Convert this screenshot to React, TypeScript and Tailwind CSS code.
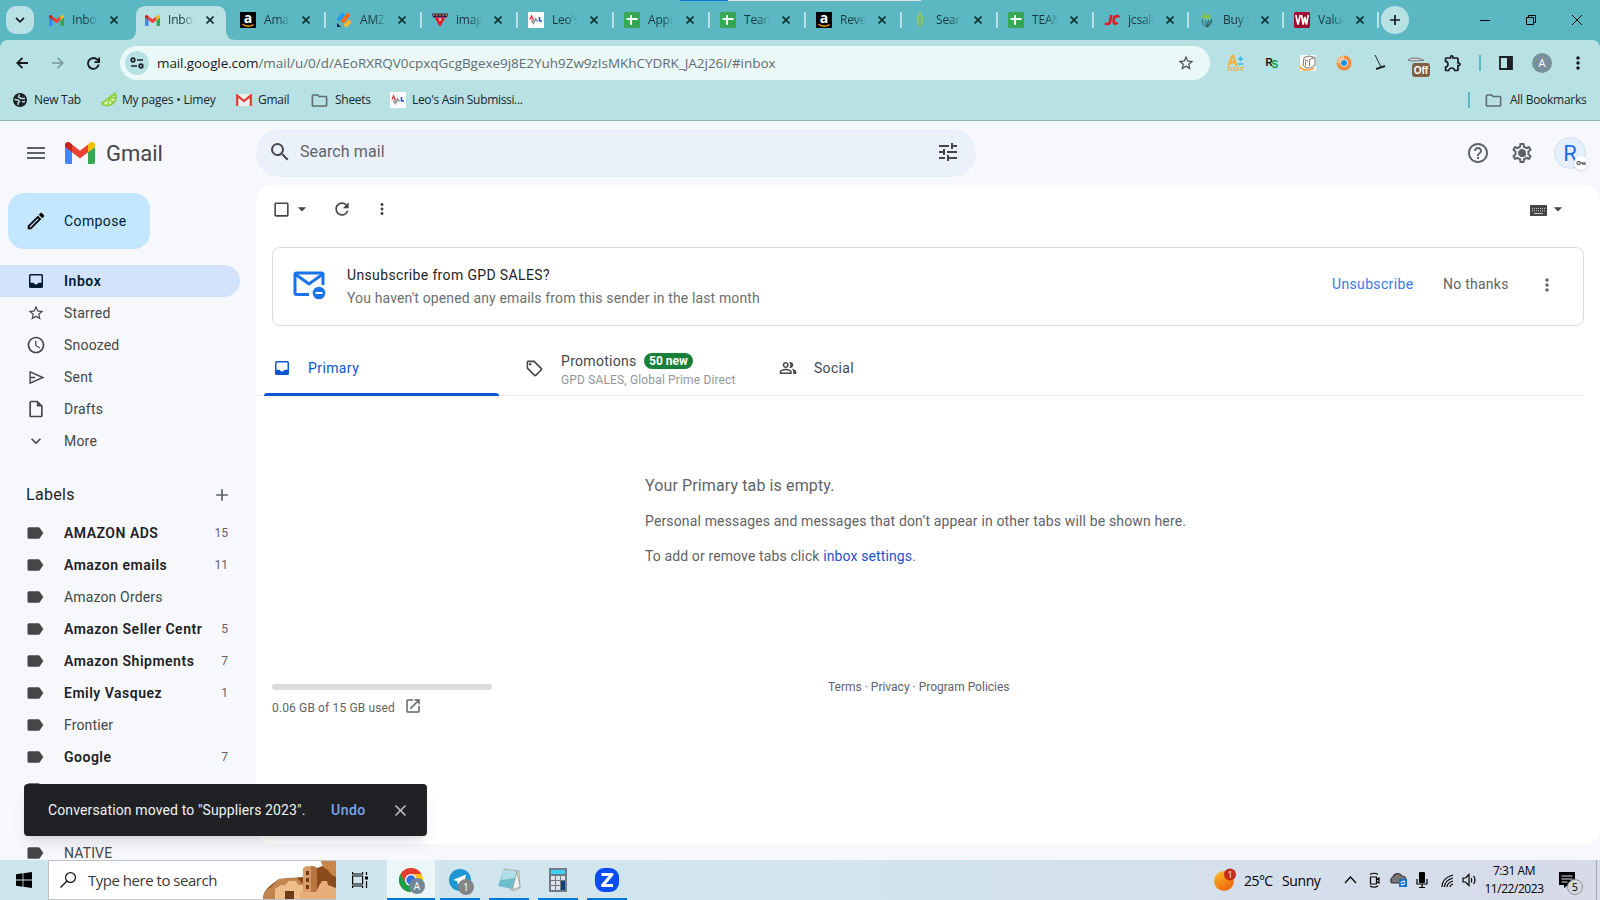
import type { ReactNode } from "react";
import {
  MdAccessTime,
  MdAdd,
  MdArrowDropDown,
  MdCheckBoxOutlineBlank,
  MdClose,
  MdHelpOutline,
  MdKeyboardArrowDown,
  MdLabel,
  MdMenu,
  MdMoreVert,
  MdOpenInNew,
  MdOutlineEdit,
  MdOutlineExtension,
  MdOutlineFolder,
  MdOutlineInsertDriveFile,
  MdOutlinePeopleAlt,
  MdOutlineSell,
  MdOutlineSettings,
  MdRefresh,
  MdSearch,
  MdStarBorder,
  MdTune,
} from "react-icons/md";

/* ---------- favicons ---------- */

const GmailIcon = ({ className = "" }: { className?: string }) => (
  <svg viewBox="0 0 30 22" className={className}>
    <path d="M0 5v15a2 2 0 0 0 2 2h5V10z" fill="#4285f4" />
    <path d="M30 5v15a2 2 0 0 1-2 2h-5V10z" fill="#34a853" />
    <path d="M7 2.600 15 8.700l8-6.100V10.300l-8 6.100-8-6.100z" fill="#ea4335" />
    <path d="M0 5V3C0 .2 3.300-1 5.400.9L7 2.300v8L0 5z" fill="#c5221f" />
    <path d="M30 5V3c0-2.800-3.300-4-5.400-2.100L23 2.300v8L30 5z" fill="#fbbc04" />
  </svg>
);

const GmailOldIcon = () => (
  <svg viewBox="0 0 16 12" className="h-3 w-4">
    <rect width="16" height="12" rx="1" fill="#eceff1" />
    <path d="M1.200 12V1.500L8 7l6.800-5.500V12" fill="none" stroke="#e0392c" strokeWidth="2.200" />
  </svg>
);

const AmazonIcon = () => (
  <svg viewBox="0 0 16 16" className="size-4">
    <rect width="16" height="16" fill="#000" />
    <text x="8" y="11" textAnchor="middle" fontSize="14" fontWeight="700" fontFamily="Open Sans, sans-serif" fill="#fff">a</text>
    <path d="M2.500 12.300c3 2.200 7.500 2.300 11 .3" fill="none" stroke="#f90" strokeWidth="1.300" />
  </svg>
);

const AmzIcon = () => (
  <svg viewBox="0 0 16 16" className="size-4" strokeLinecap="round" strokeWidth="4">
    <path d="M3 7 7 3" stroke="#1e9bff" />
    <path d="m7 9 5-6" stroke="#ff6a13" />
    <path d="m10 13 3-3" stroke="#ffb52e" />
    <path d="M1 11v4h4z" fill="#0b1f4d" strokeWidth="0" />
  </svg>
);

const FunnelIcon = () => (
  <svg viewBox="0 0 16 16" className="size-4">
    <path d="M0 1.500h16l-1 4H1z" fill="#3b1d4d" />
    <path d="M1 3h14" stroke="#e8a13c" strokeWidth="1" strokeDasharray="2 1" />
    <path d="M2.500 5.500h11L8 15z" fill="#e51c2b" />
    <path d="M6.500 6.500h3l-1.500 3z" fill="#fff" />
  </svg>
);

const LeoIcon = () => (
  <svg viewBox="0 0 16 16" className="size-4">
    <rect width="16" height="16" fill="#fff" />
    <path d="m2 7.500 1.500-3.500 2 4.500" fill="none" stroke="#e23b3b" strokeWidth="1.400" />
    <path d="m3.500 8.500 2 3L7.500 7l2 2.500" fill="none" stroke="#8d8f93" strokeWidth="1.500" />
    <path d="M11.500 5v4H14" fill="none" stroke="#1f5bc4" strokeWidth="1.600" />
  </svg>
);

const SheetIcon = () => (
  <svg viewBox="0 0 16 16" className="size-4">
    <rect width="16" height="16" rx="1.500" fill="#34a853" />
    <path d="M7 3v10M2.500 7h11" stroke="#fff" strokeWidth="1.800" />
  </svg>
);

const WheatIcon = () => (
  <svg viewBox="0 0 16 16" className="size-4" fill="#a4cf3e">
    <path d="M7.700 2h.7v14h-.7z" fill="#7fb52e" />
    <ellipse cx="8" cy="2" rx="1" ry="1.700" />
    <ellipse cx="6" cy="5" rx="1" ry="1.400" />
    <ellipse cx="10" cy="5" rx="1" ry="1.400" />
    <ellipse cx="6" cy="8.500" rx="1" ry="1.400" />
    <ellipse cx="10" cy="8.500" rx="1" ry="1.400" />
    <ellipse cx="6.400" cy="12" rx=".9" ry="1.200" />
    <ellipse cx="9.600" cy="12" rx=".9" ry="1.200" />
  </svg>
);

const JcIcon = () => (
  <svg viewBox="0 0 16 16" className="size-4">
    <path d="M7.500 3 5.800 10.500Q5.300 12 3.500 12H.8" fill="none" stroke="#e11b22" strokeWidth="2.700" />
    <path d="M15 5.200Q14.500 3.800 12.500 4.100 10.300 4.500 9.700 8q-.5 3.500 1.300 3.700 1.500.1 2.500-1.200" fill="none" stroke="#e11b22" strokeWidth="2.600" />
  </svg>
);

const PlantIcon = () => (
  <svg viewBox="0 0 16 16" className="size-4" fill="none">
    <path d="m8 6-6-2M8 6 5 1M8 6l3-4M8 6l4-.5" stroke="#8cc63f" strokeWidth="1.600" />
    <path d="M3.500 7.500q-.5 5.500 4.500 7.500 5-2 4.500-7.500L8 15M6.500 8.500 8 15l1.500-6.500" stroke="#2b5d5e" strokeWidth="1" />
  </svg>
);

const VwIcon = () => (
  <svg viewBox="0 0 16 16" className="size-4">
    <rect width="16" height="16" rx="1.500" fill="#a00a2d" />
    <path d="M1.800 3 4 12.500 6.200 3M7.500 3l1.600 9.500L10.800 5l1.700 7.500L14.200 3" fill="none" stroke="#fff" strokeWidth="1.700" />
  </svg>
);

const LimeIcon = () => (
  <svg viewBox="0 0 16 16" className="size-4">
    <path d="M14 1.500A8.500 8.500 0 0 1 .8 11.500z" fill="#dff2b8" stroke="#8ccf3f" strokeWidth="2" />
    <path d="m8 6.500 4 4M8 6.500l-1 7M8 6.500l6-1" stroke="#8ccf3f" strokeWidth="1.300" />
  </svg>
);

const GlobeIcon = () => (
  <svg viewBox="0 0 14 14" className="size-3.5">
    <circle cx="7" cy="7" r="7" fill="#1d1f23" />
    <path d="M1.500 6.500 5 7l1.500 1.500L5 10l.3 2M6.500 1.500 5.500 4 8 5.500h4M9 9l3-.5" fill="none" stroke="#b8e1e4" strokeWidth="1.500" />
  </svg>
);

/* ---------- browser chrome ---------- */

type BrowserTab = { title: string; icon: ReactNode; active?: boolean; narrow?: boolean; divider?: boolean };

const browserTabs: BrowserTab[] = [
  { title: "Inbox", icon: <GmailIcon className="h-[11px] w-[15px]" /> },
  { title: "Inbox", icon: <GmailIcon className="h-[11px] w-[15px]" />, active: true },
  { title: "Amaz", icon: <AmazonIcon />, divider: true },
  { title: "AMZS", icon: <AmzIcon />, divider: true },
  { title: "image", icon: <FunnelIcon />, divider: true },
  { title: "Leo's A", icon: <LeoIcon />, divider: true },
  { title: "Appro", icon: <SheetIcon />, divider: true },
  { title: "Team", icon: <SheetIcon />, divider: true },
  { title: "Reven", icon: <AmazonIcon />, divider: true },
  { title: "Search", icon: <WheatIcon />, divider: true },
  { title: "TEAM", icon: <SheetIcon />, divider: true },
  { title: "jcsales", icon: <JcIcon />, narrow: true, divider: true },
  { title: "Buy I", icon: <PlantIcon />, narrow: true, divider: true },
  { title: "Value", icon: <VwIcon />, narrow: true, divider: true },
];

const Tab = ({ title, icon, active, narrow, divider }: BrowserTab) => (
  <div className={`relative flex h-[34px] items-center pb-1.5 pl-2.5 ${narrow ? "w-[95px]" : "w-24"}`}>
    {active && (
      <svg viewBox="0 0 110 34" className="absolute -left-2 top-0 h-[34px] w-[110px]">
        <path d="M0 34q10 0 10-10V10Q10 0 20 0h70q10 0 10 10v14q0 10 10 10z" fill="#b8e1e4" />
      </svg>
    )}
    <span className="relative flex w-4 shrink-0 justify-center">{icon}</span>
    <span className="relative ml-2 w-[26px] overflow-hidden whitespace-nowrap text-[12px] tracking-[-0.2px] text-[#17383c] [mask-image:linear-gradient(to_right,#000_55%,transparent)]">
      {title}
    </span>
    <svg viewBox="0 0 8 8" className="relative ml-3 size-2 shrink-0" stroke="#122f33" strokeWidth="1.6">
      <path d="m.5.5 7 7M7.500.5l-7 7" />
    </svg>
    {divider && <span className="absolute right-0 top-1.5 h-4 w-0.5 bg-[#b8e1e4]" />}
  </div>
);

const TabStrip = () => (
  <div className="relative flex h-10 shrink-0 items-start bg-[#5bb8c2] pt-1.5">
    <div className="absolute left-[680px] top-0 flex h-px w-[241px] bg-[#dfe3e4]">
      <span className="h-px w-12 bg-[#0a78d6]" />
    </div>
    <button className="ml-1.5 mr-1 flex size-7 items-center justify-center rounded-[10px] bg-[#b8e1e4]">
      <svg viewBox="0 0 10 6" className="h-1.5 w-2.5" fill="none" stroke="#17191c" strokeWidth="1.7">
        <path d="m1 .8 4 4 4-4" />
      </svg>
    </button>
    {browserTabs.map((t, i) => (
      <Tab key={i} {...t} />
    ))}
    <button className="ml-0.5 flex size-7 items-center justify-center rounded-full bg-[#b8e1e4]">
      <svg viewBox="0 0 10 10" className="size-2.5" stroke="#17191c" strokeWidth="1.7">
        <path d="M5 0v10M0 5h10" />
      </svg>
    </button>
    <div className="ml-auto flex h-7 items-center">
      <svg viewBox="0 0 120 12" className="mr-3.5 h-3 w-[120px]" fill="none" stroke="#000">
        <path d="M14 6.500h10" />
        <path d="M60.500 3.500h7v7h-7zM62.500 3.500v-2h7v7h-2" />
        <path d="m106 1 10 10M116 1l-10 10" />
      </svg>
    </div>
  </div>
);

const AddressBar = () => (
  <div className="flex h-[46px] items-center">
    <div className="flex w-[120px] items-center text-[#16191c]">
      <svg viewBox="0 0 12 12" className="ml-4 size-3" fill="none" stroke="currentColor" strokeWidth="1.8">
        <path d="M12 6H1.500M6.500.8 1.300 6l5.200 5.200" />
      </svg>
      <svg viewBox="0 0 12 12" className="ml-6 size-3 text-[#76999c]" fill="none" stroke="currentColor" strokeWidth="1.600">
        <path d="M0 6h10.500M5.500.8 10.700 6l-5.200 5.200" />
      </svg>
      <svg viewBox="0 0 13 13" className="ml-[23px] size-[13px]" fill="none" stroke="currentColor" strokeWidth="1.800">
        <path d="M11.700 7.500A5.400 5.400 0 1 1 10.600 3L12 4.700M12.100.5v4.600H7.500" />
      </svg>
    </div>
    <div className="flex h-[34px] w-[1090px] items-center rounded-full bg-[#ebf8f8] pl-[5px] pr-[15px]">
      <span className="flex size-6 items-center justify-center rounded-full bg-[#b8e1e4]">
        <svg viewBox="0 0 14 12" className="h-3 w-3.5" fill="none" stroke="#1d1f23" strokeWidth="1.700">
          <circle cx="3" cy="3" r="1.800" />
          <path d="M7 3h6M1 9h6" />
          <circle cx="11" cy="9" r="1.800" />
        </svg>
      </span>
      <span className="ml-2 whitespace-nowrap text-[13.5px] tracking-[-0.03px] text-[#5f6b70]">
        <span className="tracking-[-0.1px] text-[#17191c]">mail.google.com</span>
        /mail/u/0/d/AEoRXRQV0cpxqGcgBgexe9j8E2Yuh9Zw9zIsMKhCYDRK_JA2j26I/#inbox
      </span>
      <MdStarBorder size={18} className="ml-auto text-[#454b4e]" />
    </div>
    <div className="flex flex-1 items-center pl-[17px]">
      <svg viewBox="0 0 18 16" className="h-4 w-[18px]">
        <path d="m1.500 11 3.500-10h1l3.500 10M3 7.500h5" fill="none" stroke="#fbb034" strokeWidth="2.200" />
        <path d="M11 4h5M13.500 1.500v5M11 9h5" stroke="#35b6e6" strokeWidth="1.300" />
        <text x="9" y="16" textAnchor="middle" fontSize="4.800" fontWeight="700" fontFamily="Liberation Sans, sans-serif" fill="#f2a63c">SCOUT</text>
      </svg>
      <svg viewBox="0 0 16 16" className="ml-[19px] size-4" fontFamily="Liberation Sans, sans-serif" fontWeight="700">
        <text x="1.500" y="11" fontSize="10" fill="#111">R</text>
        <text x="7.500" y="13" fontSize="10" fill="#139a48">S</text>
      </svg>
      <svg viewBox="0 0 16 16" className="ml-5 size-4" fill="none">
        <path d="M0 0h16v16H0z" fill="#fbfaf6" />
        <path d="M4 2.500 9 1l6 1.500v8L10 13H6L3 10zM9.500 4.500V11M9.500 4.500 15 2.500M5 5l3 1M5.500 6.500v4" stroke="#7b756c" />
        <path d="M0 11q1 4 7 4 5 0 7-2" stroke="#f0a040" strokeWidth="1.500" />
      </svg>
      <svg viewBox="0 0 16 16" className="ml-5 size-4">
        <circle cx="8" cy="8" r="7.500" fill="#f08c3c" />
        <path d="M8 .5A7.500 7.500 0 0 0 .5 8H4l4-4z" fill="#f9bd8a" />
        <circle cx="8" cy="8" r="4" fill="#fbe3d0" />
        <circle cx="8" cy="8" r="3" fill="#1c8fe0" />
      </svg>
      <svg viewBox="0 0 16 16" className="ml-5 size-4" fill="none" stroke="#222">
        <path d="m3 0 6 12" />
        <path d="m4 14 9-3" strokeWidth="2" />
      </svg>
      <span className="relative ml-5 h-4 w-[18px]">
        <svg viewBox="0 0 18 16" className="h-4 w-[18px]">
          <path d="M0 5q2-2.500 8-2 6 .5 8 2.500L3 6z" fill="#d5d5d5" stroke="#777" />
        </svg>
        <span className="absolute left-1 top-2 flex h-[14px] w-[18px] items-center justify-center rounded-[3px] bg-[#806040] font-['Liberation_Sans',sans-serif] text-[10px] font-bold text-white">
          Off
        </span>
      </span>
      <MdOutlineExtension size={20} className="ml-[17px] text-[#16191c]" />
      <span className="ml-4 h-4 w-0.5 bg-[#5bb8c2]" />
      <svg viewBox="0 0 16 16" className="ml-[17px] size-4">
        <path d="M2 2h12v12H2z" fill="none" stroke="#1d1f23" strokeWidth="1.800" />
        <path d="M9 2h5v12H9z" fill="#1d1f23" />
      </svg>
      <span className="ml-[18px] flex size-5 items-center justify-center rounded-full bg-[#78909c] text-[11px] text-white">A</span>
      <MdMoreVert size={20} className="ml-4 text-[#16191c]" />
    </div>
  </div>
);

const Bookmarks = () => (
  <div className="flex h-[34px] items-center whitespace-nowrap pb-1.5 text-[12px] tracking-[-0.27px] text-[#17282b]">
    <div className="ml-[13px] flex w-[88px] items-center gap-[7px]">
      <GlobeIcon />
      New Tab
    </div>
    <div className="flex w-[135px] items-center gap-[5px] tracking-[-0.2px]">
      <LimeIcon />
      My pages • Limey
    </div>
    <div className="flex w-[74px] items-center gap-1.5">
      <GmailOldIcon />
      Gmail
    </div>
    <div className="flex w-20 items-center gap-1.5">
      <MdOutlineFolder size={19} className="text-[#5f6b6e]" />
      Sheets
    </div>
    <div className="flex items-center gap-1.5 tracking-[-0.33px]">
      <LeoIcon />
      Leo's Asin Submissi...
    </div>
    <div className="ml-auto flex w-[132px] items-center">
      <span className="h-4 w-0.5 bg-[#5bb8c2]" />
      <MdOutlineFolder size={19} className="ml-[14px] mr-[7px] text-[#5f6b6e]" />
      All Bookmarks
    </div>
  </div>
);

/* ---------- gmail ---------- */

const InboxIcon = () => (
  <svg viewBox="0 0 14 14" className="size-3.5" fill="currentColor">
    <path
      fillRule="evenodd"
      d="M1.500 0h11A1.500 1.500 0 0 1 14 1.500v11a1.500 1.500 0 0 1-1.500 1.500h-11A1.500 1.500 0 0 1 0 12.500v-11A1.500 1.500 0 0 1 1.500 0zM1.500 1.500v7.300h3.200a2.400 2.400 0 0 0 4.600 0h3.200V1.500z"
    />
  </svg>
);

const navItems = [
  { label: "Inbox", icon: <InboxIcon />, active: true },
  { label: "Starred", icon: <MdStarBorder size={18} /> },
  { label: "Snoozed", icon: <MdAccessTime size={20} /> },
  {
    label: "Sent",
    icon: (
      <svg viewBox="0 0 24 24" className="size-[17px]" fill="none" stroke="currentColor" strokeWidth="2">
        <path d="M3 4v16l18-8zM3 12h7" />
      </svg>
    ),
  },
  { label: "Drafts", icon: <MdOutlineInsertDriveFile size={20} /> },
  { label: "More", icon: <MdKeyboardArrowDown size={20} /> },
];

const labels = [
  { name: "AMAZON ADS", count: 15 },
  { name: "Amazon emails", count: 11 },
  { name: "Amazon Orders" },
  { name: "Amazon Seller Centr", count: 5 },
  { name: "Amazon Shipments", count: 7 },
  { name: "Emily Vasquez", count: 1 },
  { name: "Frontier" },
  { name: "Google", count: 7 },
  { name: "" },
  { name: "" },
  { name: "NATIVE" },
];

const Sidebar = () => (
  <aside className="h-[675px] w-64 shrink-0 overflow-hidden text-[14px] text-[#444746]">
    <button className="ml-2 mt-2 flex h-14 w-[142px] items-center rounded-2xl bg-[#c2e7ff] pl-[17px] font-[450] text-[#001d35]">
      <MdOutlineEdit size={22} className="text-black" />
      <span className="ml-[17px] tracking-[0.4px]">Compose</span>
    </button>
    <nav className="mt-4">
      {navItems.map((n) => (
        <div
          key={n.label}
          className={`flex h-8 w-60 items-center rounded-r-full ${n.active ? "bg-[#d3e3fd] font-semibold text-[#001d35]" : ""}`}
        >
          <span className="ml-[26px] flex w-5 justify-center">{n.icon}</span>
          <span className={`ml-[18px] ${n.active ? "tracking-[0.55px]" : "tracking-[0.2px]"}`}>{n.label}</span>
        </div>
      ))}
    </nav>
    <div className="mt-[22px] flex h-[32px] items-center justify-between pl-[26px] pr-6 text-[16px] text-[#1f1f1f]">
      <span className="tracking-[0.3px]">Labels</span>
      <MdAdd size={20} className="text-[#5f6368]" />
    </div>
    <div className="mt-1.5">
      {labels.map((l, i) => (
        <div
          key={i}
          className={`flex h-8 w-[228px] items-center ${l.count ? "font-semibold tracking-[0.5px] text-[#202124]" : "tracking-[0.15px]"}`}
        >
          <MdLabel size={20} className="ml-[25px] text-[#444746]" />
          <span className="ml-[19px] whitespace-nowrap">{l.name}</span>
          <span className="ml-auto text-[12px] font-normal tracking-normal text-[#5f6368]">{l.count}</span>
        </div>
      ))}
    </div>
  </aside>
);

const GmailHeader = () => (
  <header className="flex h-16 shrink-0 items-center">
    <div className="flex w-64 items-center pl-6">
      <MdMenu size={24} className="text-[#5f6368]" />
      <GmailIcon className="ml-[17px] h-[22px] w-[30px]" />
      <span className="ml-[11px] text-[22px] text-[#444746]">Gmail</span>
    </div>
    <div className="flex h-12 w-[720px] items-center rounded-full bg-[#eaf1fb] pb-0.5 pl-3 pr-4">
      <MdSearch size={24} className="text-[#444746]" />
      <span className="ml-2 text-[16px] tracking-[0.1px] text-[#5f6368]">Search mail</span>
      <MdTune size={24} className="ml-auto text-[#444746]" />
    </div>
    <div className="ml-auto flex items-center text-[#5f6368]">
      <MdHelpOutline size={24} />
      <span className="relative ml-5 flex size-6 items-center justify-center">
        <MdOutlineSettings size={24} />
        <span className="absolute size-[7px] rounded-full bg-[#5f6368]" />
      </span>
      <span className="relative ml-5 mr-3.5 flex size-8 items-center justify-center rounded-full border border-[#d3def0] bg-[#e6effc] text-[22px] text-[#1a6fe8]">
        R
        <span className="absolute -bottom-0.5 -right-[3px] flex size-[14px] items-center justify-center rounded-full bg-white shadow">
          <svg viewBox="0 0 10 6" className="h-1.5 w-2.5" fill="none" stroke="#5f6368" strokeWidth="1.300">
            <circle cx="2.600" cy="3" r="1.600" />
            <path d="M4.200 3H9v2M7 3v2" />
          </svg>
        </span>
      </span>
    </div>
  </header>
);

const MailToolbar = () => (
  <div className="flex h-12 items-center text-[#444746]">
    <MdCheckBoxOutlineBlank size={19} className="ml-4" />
    <MdArrowDropDown size={20} className="ml-px" />
    <MdRefresh size={20} className="ml-5" />
    <MdMoreVert size={18} className="ml-[21px]" />
    <svg viewBox="0 0 17 11" className="ml-auto mt-[3px] h-[11px] w-[17px]">
      <rect width="17" height="11" rx=".5" fill="#444746" />
      <path d="M2 3.500h13M2 5.800h13" stroke="#c4c7c5" strokeDasharray="1 1" />
      <path d="M4 8.500h9" stroke="#c4c7c5" />
    </svg>
    <MdArrowDropDown size={20} className="ml-px mr-8" />
  </div>
);

const UnsubscribeCard = () => (
  <div className="ml-4 mr-4 mt-[14px] flex h-[79px] items-center rounded-lg border border-[#dadce0] text-[14px]">
    <svg viewBox="0 0 34 30" className="mb-[3px] ml-[19px] h-[30px] w-[34px] shrink-0">
      <path d="M17 24.500H4.500q-1.500 0-1.500-1.500V4.500Q3 3 4.500 3h25Q31 3 31 4.500V15" fill="none" stroke="#1a73e8" strokeWidth="3" />
      <path d="m3 4 14 10L31 4" fill="none" stroke="#1a73e8" strokeWidth="3" />
      <circle cx="27" cy="23" r="6.300" fill="#1a73e8" />
      <path d="M23.500 23h7" stroke="#fff" strokeWidth="2" />
    </svg>
    <div className="ml-[21px]">
      <div className="h-[23px] font-[450] leading-[23px] tracking-[0.36px] text-[#1f1f1f]">Unsubscribe from GPD SALES?</div>
      <div className="h-[23px] leading-[23px] tracking-[0.14px] text-[#6b6f73]">
        You haven't opened any emails from this sender in the last month
      </div>
    </div>
    <span className="ml-auto w-[111px] pb-1 font-[450] tracking-[0.35px] text-[#3b78f0]">Unsubscribe</span>
    <span className="w-[94px] pb-1 font-[450] tracking-[0.25px] text-[#5f6368]">No thanks</span>
    <MdMoreVert size={20} className="mb-1 mr-[26px] text-[#5f6368]" />
  </div>
);

const Categories = () => (
  <div className="mr-4 mt-[13px] flex h-[57px] border-b border-[#eceff1] pt-0.5 text-[14px] font-[450] text-[#444746]">
    <div className="relative ml-2 flex w-[235px] items-center pl-[11px] text-[#0b57d0]">
      <InboxIcon />
      <span className="ml-[19px] tracking-[0.4px]">Primary</span>
      <span className="absolute -bottom-px left-0 h-[3px] w-full rounded-t bg-[#0b57d0]" />
    </div>
    <div className="flex w-[254px] items-center pl-[26px]">
      <MdOutlineSell size={19} />
      <div className="ml-[17px] pt-1">
        <div className="flex h-5 items-center">
          <span className="w-[75px] tracking-[0.3px]">Promotions</span>
          <span className="ml-2 flex h-4 w-[49px] items-center justify-center rounded-full bg-[#188038] text-[12px] font-bold text-white">
            50 new
          </span>
        </div>
        <div className="h-[18px] whitespace-nowrap text-[12px] font-normal leading-[19px] tracking-[0.15px] text-[#949799]">
          GPD SALES, Global Prime Direct
        </div>
      </div>
    </div>
    <div className="flex items-center pl-[26px]">
      <MdOutlinePeopleAlt size={18} />
      <span className="ml-[17px] tracking-[0.3px]">Social</span>
    </div>
  </div>
);

const MailPane = () => (
  <main className="h-[659px] flex-1 rounded-2xl bg-white">
    <MailToolbar />
    <UnsubscribeCard />
    <Categories />
    <div className="ml-[389px] mt-[79px] text-[14px] text-[#5f6368]">
      <p className="h-[35px] text-[16px] leading-[22px] tracking-[0.12px]">Your Primary tab is empty.</p>
      <p className="h-[35px] leading-[22px] tracking-[0.15px]">
        Personal messages and messages that don’t appear in other tabs will be shown here.
      </p>
      <p className="h-[35px] leading-[22px] tracking-[0.12px]">
        To add or remove tabs click <span className="text-[#1f53cf]">inbox settings</span>.
      </p>
    </div>
    <footer className="ml-4 mt-[98px] flex text-[12px] text-[#5f6368]">
      <div className="w-[556px]">
        <div className="mt-1.5 h-1.5 w-[220px] rounded-full bg-[#dadce0]" />
        <div className="mt-[7px] flex items-center gap-[9px]">
          <span className="tracking-[0.14px]">0.06 GB of 15 GB used</span>
          <MdOpenInNew size={18} className="mb-1" />
        </div>
      </div>
      <span className="h-[18px] leading-[18px]">Terms · Privacy · Program Policies</span>
    </footer>
  </main>
);

const Toast = () => (
  <div className="absolute left-6 top-[784px] flex h-[52px] w-[403px] items-center rounded bg-[#202124] text-[14px] shadow-lg">
    <span className="ml-6 w-[283px] whitespace-nowrap font-[450] tracking-[0.12px] text-[#f1f3f4]">
      Conversation moved to "Suppliers 2023".
    </span>
    <span className="w-[60px] font-medium tracking-[0.5px] text-[#7ba6f5]">Undo</span>
    <MdClose size={19} className="text-[#bdc1c6]" />
  </div>
);

/* ---------- windows taskbar ---------- */

const CliffArt = () => (
  <svg viewBox="0 0 73 38" className="h-[38px] w-[73px]">
    <path d="M8 24 16 18l24-2 12-8 10-4-4-4h15v38H0q0-8 8-14z" fill="#8a4a1a" />
    <path d="M58 0h15v16q-6-2-8-7-6-2-7-9z" fill="#c8864a" />
    <path d="M0 38q1-9 8-12l8-8 18-1 6 6v15z" fill="#c48450" />
    <path d="M12 38V28l6-4h4l4-4h7l2 4h5v14z" fill="#edbd8c" />
    <path d="M40 8q0-2 5-3 9 0 9 3v30H40z" fill="#d89c66" />
    <path d="M48 5q6 0 6 3v30h-6z" fill="#b87440" />
    <path d="M37 31h16l4-8 2-3h5l1 4 8 3v11H37z" fill="#e6ae78" />
    <path d="M22 30h9v8h-9zM43 10h3v4h-3zM43 17h3v4h-3zM43 24h3v4h-3z" fill="#6f3b18" />
  </svg>
);

const TaskApp = ({ children, active }: { children: ReactNode; active?: boolean }) => (
  <div className={`relative flex h-10 w-12 items-center justify-center ${active ? "bg-[#ecf5f8]" : ""}`}>
    {children}
    <span className={`absolute bottom-0 h-0.5 bg-[#0078d7] ${active ? "w-12" : "w-10"}`} />
  </div>
);

const Taskbar = () => (
  <footer className="flex h-10 shrink-0 items-center bg-linear-to-r from-[#cde6ee] via-[#d2e5ee] to-[#d6dae9]">
    <div className="flex w-12 justify-center">
      <svg viewBox="0 0 16 16" className="size-4">
        <path d="M0 2.200 6.600 1.300V7.600H0zM7.400 1.200 16 0v7.600H7.400zM0 8.400h6.600v6.300L0 13.800zM7.400 8.400H16V16l-8.600-1.200z" />
      </svg>
    </div>
    <div className="flex h-10 w-72 items-center border border-r-0 border-[#bfc4c7] bg-white pl-[11px]">
      <svg viewBox="0 0 16 16" className="size-4" fill="none" stroke="#111" strokeWidth="1.200">
        <circle cx="10.500" cy="5.500" r="4.900" />
        <path d="M7 9 .5 15.500" />
      </svg>
      <span className="ml-3 whitespace-nowrap text-[15px] tracking-[-0.48px] text-[#3a3a3a]">Type here to search</span>
      <span className="ml-auto">
        <CliffArt />
      </span>
    </div>
    <svg viewBox="0 0 16 16" className="ml-4 size-4" fill="none" stroke="#000" strokeWidth="1.200">
      <path d="M.6 4h10v8H.6zM.6 0v2h10V0M.6 16v-2h10v2M14.500 0v3M14.500 9v7" />
      <path d="M13 4.500h3v3h-3z" fill="#000" stroke="none" />
    </svg>
    <div className="ml-[19px] flex gap-px">
      <TaskApp active>
        <span className="relative">
          <svg viewBox="0 0 24 24" className="size-6">
            <circle cx="12" cy="12" r="12" fill="#fbc116" />
            <path d="M1.600 6A12 12 0 0 0 12 24l5.200-9L12 12 6.800 15z" fill="#1e9e4a" />
            <path d="M12 6h10.400A12 12 0 0 0 1.600 6l5.200 9z" fill="#e33b2e" />
            <circle cx="12" cy="12" r="6" fill="#fff" />
            <circle cx="12" cy="12" r="4.700" fill="#2f74e6" />
          </svg>
          <span className="absolute left-[10px] top-[10px] flex size-4 items-center justify-center rounded-full bg-[#6f8894] text-[10px] text-white">A</span>
        </span>
      </TaskApp>
      <TaskApp>
        <span className="relative">
          <svg viewBox="0 0 22 22" className="size-[22px]">
            <circle cx="11" cy="11" r="11" fill="#1e96d4" />
            <path d="m4 11 13-5.500-2.300 11-4-3-2 2-.6-3.500z" fill="#fff" />
          </svg>
          <span className="absolute left-[9px] top-[10px] flex size-4 items-center justify-center rounded-full bg-[#858585] text-[11px] text-white">1</span>
        </span>
      </TaskApp>
      <TaskApp>
        <svg viewBox="0 0 24 24" className="size-6">
          <path d="m7 1 15 2 1 17-6 3-3-1z" fill="#e9e6dc" stroke="#8d8d85" strokeWidth=".6" />
          <path d="M6.500 2 20 3.500 15.500 21 1 18z" fill="#6dbccb" />
          <path d="M6.500 2 20 3.500 18 10 4 12z" fill="#b2e0e8" />
          <path d="m20 3.500-4.500 18L23 19z" fill="#f3f2ec" stroke="#777" strokeWidth=".5" />
        </svg>
      </TaskApp>
      <TaskApp>
        <svg viewBox="0 0 18 24" className="h-6 w-[18px]">
          <path d="M0 0h18v24H0z" fill="#6f7b87" />
          <path d="M2 2h14v4H2z" fill="#41d0f5" />
          <path d="M2 8h4v4H2zM7 8h4v4H7zM12 8h4v4h-4zM2 13h4v4H2zM7 13h4v4H7zM2 18h4v4H2zM7 18h4v4H7z" fill="#dfe3e7" />
          <path d="M12 13h4v9h-4z" fill="#0f3f7a" />
        </svg>
      </TaskApp>
      <TaskApp>
        <svg viewBox="0 0 24 24" className="size-6">
          <rect width="24" height="24" rx="9" fill="#0b4df5" />
          <path d="M6.500 6.500h10.500l-9.500 11h10.500" fill="none" stroke="#fff" strokeWidth="3.200" strokeLinejoin="round" />
        </svg>
      </TaskApp>
    </div>
    <div className="ml-auto flex items-center text-black">
      <svg viewBox="0 0 24 24" className="size-6">
        <defs>
          <linearGradient id="sun" x1="0" y1="0" x2="0.600" y2="1">
            <stop offset="0" stopColor="#f8c22c" />
            <stop offset="1" stopColor="#f0660f" />
          </linearGradient>
        </defs>
        <circle cx="10" cy="13" r="10" fill="url(#sun)" />
        <circle cx="16" cy="6.500" r="6" fill="#c42b1c" />
        <text x="16" y="10" textAnchor="middle" fontSize="9" fontFamily="Open Sans, sans-serif" fill="#fff">1</text>
      </svg>
      <span className="ml-1.5 w-[38px] text-[14px] tracking-[-0.55px]">25°C</span>
      <span className="w-[61px] text-[14px] tracking-[-0.4px]">Sunny</span>
      <svg viewBox="0 0 134 16" className="h-4 w-[134px]" fill="none" stroke="#000" strokeWidth="1.200">
        <path d="m2 11 5.500-6 5.500 6" />
        <path d="M27.500 5h6v7h-6zM33.500 7.500l2.500-1.500v5l-2.500-1.500M27 2.500q4-2.500 8 0M27 14q4 2.500 8 0" />
        <path d="M49 11a3.500 3.500 0 0 1 1-6 5 5 0 0 1 9-1 4 4 0 0 1 4 4v3z" fill="#777" stroke="#333" />
        <path d="M56 7h8v8h-8z" fill="#1271d0" stroke="none" />
        <path d="M58 12q2 2 4-1M62 10q-2-2-4 1" stroke="#fff" />
        <rect x="76" y="0" width="6" height="11" rx="1" fill="#000" stroke="none" />
        <path d="M74 7v5h10V7M79 12v3.500M76 15.500h6" />
        <path d="M99 15q0-9 11-12M101.500 15q0-6.500 8.500-9M104 15q0-4 6-6M107 15q0-2 3-3" />
        <path d="M120 6h2.500l3.500-3.500v11L122.500 10H120zM128 6q1.500 2 0 4.500M130.500 4q3 4 0 8" />
      </svg>
      <div className="ml-1 w-[66px] text-center text-[12px] leading-[18px] tracking-[-0.45px]">
        <div>7:31 AM</div>
        <div>11/22/2023</div>
      </div>
      <span className="relative ml-3 mr-[21px] h-4 w-4">
        <svg viewBox="0 0 16 16" className="size-4">
          <path d="M0 0h16v13H9l-4 3v-3H0z" />
          <path d="M2.500 4h11M2.500 7h11M2.500 10h6" stroke="#dde3ee" />
        </svg>
        <span className="absolute left-2 top-[7px] flex size-4 items-center justify-center rounded-full border border-[#8d9299] bg-[#d7d9de] text-[11px]">5</span>
      </span>
      <span className="mr-[3px] h-10 w-px bg-[#a2a8b5]" />
    </div>
  </footer>
);

export default function App() {
  return (
    <div className="relative flex h-[900px] w-[1600px] flex-col overflow-hidden bg-[#f6f8fc] font-['Open_Sans','Noto_Sans',sans-serif]">
      <TabStrip />
      <div className="bg-[#5bb8c2]">
        <div className="h-20 rounded-t-lg bg-[#b8e1e4]">
          <AddressBar />
          <Bookmarks />
        </div>
      </div>
      <div className="h-px shrink-0 bg-[#8fb7bd]" />
      <div className="flex h-[739px] flex-col font-[Roboto,'Open_Sans',sans-serif]">
        <GmailHeader />
        <div className="flex">
          <Sidebar />
          <MailPane />
        </div>
        <Toast />
      </div>
      <Taskbar />
    </div>
  );
}
